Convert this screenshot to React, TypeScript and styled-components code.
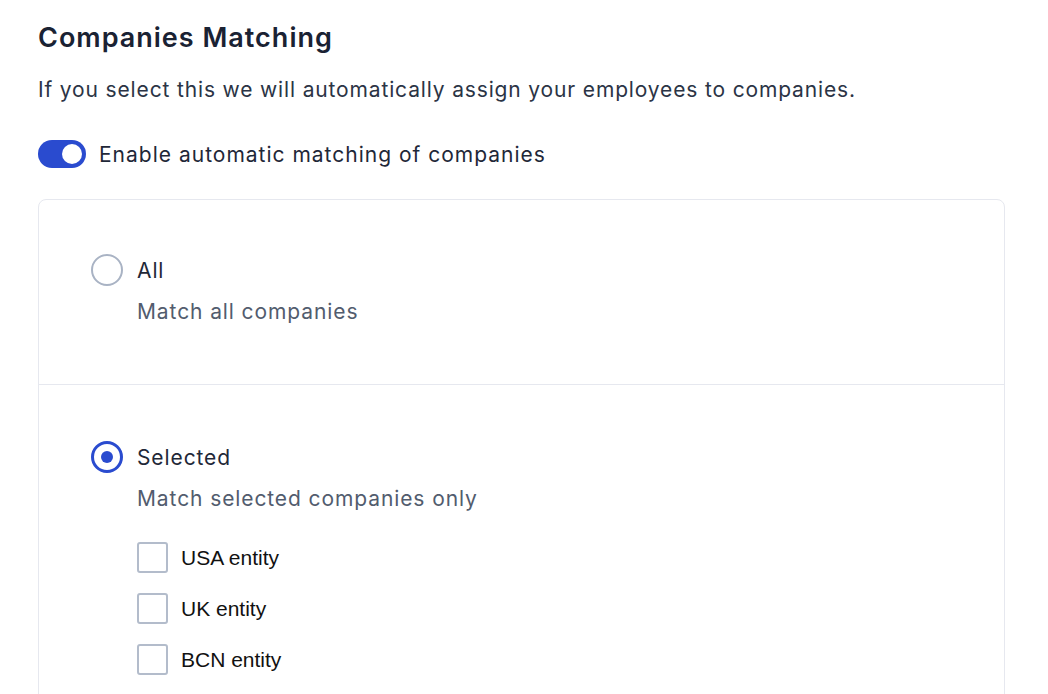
import React, { useState } from "react";
import styled, { createGlobalStyle } from "styled-components";

const GlobalStyle = createGlobalStyle`
  body {
    margin: 0;
    background: #fff;
    font-family: Inter, "Noto Sans", sans-serif;
    color: #1b2434;
  }
`;

const Page = styled.div`
  padding: 20px 43px 0 38px;
  height: 694px;
  overflow: hidden;
  box-sizing: border-box;
`;

const Title = styled.h2`
  margin: 0;
  font-size: 27px;
  font-weight: 600;
  line-height: 36px;
  color: #1a2233;
  letter-spacing: 1px;
`;

const Description = styled.p`
  margin: 20px 0 0;
  font-size: 21px;
  line-height: 28px;
  color: #2b3445;
  letter-spacing: 0.85px;
`;

const ToggleRow = styled.label`
  display: flex;
  align-items: center;
  gap: 13px;
  margin-top: 36px;
  font-size: 21px;
  color: #1f2838;
  letter-spacing: 1px;
  cursor: pointer;
`;

const Track = styled.span<{ on: boolean }>`
  position: relative;
  display: inline-block;
  width: 48px;
  height: 28px;
  border-radius: 14px;
  background: ${(p) => (p.on ? "#2a4bcf" : "#cbd2dc")};
  flex-shrink: 0;
  &::after {
    content: "";
    position: absolute;
    top: 4px;
    left: ${(p) => (p.on ? "24px" : "4px")};
    width: 20px;
    height: 20px;
    border-radius: 50%;
    background: #fff;
  }
`;

const Card = styled.div`
  margin-top: 31px;
  border: 1px solid #e6e8ef;
  border-radius: 8px;
`;

const Option = styled.div`
  padding: 54px 52px 58px;
  & + & {
    border-top: 1px solid #e6e8ef;
    padding-top: 56px;
  }
`;

const OptionHead = styled.label`
  display: flex;
  align-items: center;
  gap: 14px;
  font-size: 21px;
  color: #1f2838;
  letter-spacing: 0.9px;
  cursor: pointer;
`;

const Radio = styled.span<{ checked: boolean }>`
  box-sizing: border-box;
  width: 32px;
  height: 32px;
  border-radius: 50%;
  border: ${(p) => (p.checked ? "3px solid #2a4bcf" : "2px solid #a9b3c4")};
  display: flex;
  align-items: center;
  justify-content: center;
  flex-shrink: 0;
  &::after {
    content: "";
    width: 12px;
    height: 12px;
    border-radius: 50%;
    background: ${(p) => (p.checked ? "#2a4bcf" : "transparent")};
  }
`;

const OptionSub = styled.div`
  margin: 12px 0 0 46px;
  font-size: 21px;
  line-height: 28px;
  color: #525c6e;
  letter-spacing: 0.9px;
`;

const CheckList = styled.div`
  display: flex;
  flex-direction: column;
  gap: 20px;
  margin: 29px 0 0 46px;
`;

const CheckRow = styled.label`
  display: flex;
  align-items: center;
  gap: 13px;
  font-family: "Liberation Sans", Arial, sans-serif;
  font-size: 21px;
  color: #111;
  cursor: pointer;
`;

const Box = styled.span`
  box-sizing: border-box;
  width: 31px;
  height: 31px;
  border: 2px solid #b3bccb;
  border-radius: 3px;
  background: #fff;
  flex-shrink: 0;
`;

const entities = ["USA entity", "UK entity", "BCN entity", "GER entity"];

export default function App() {
  const [enabled, setEnabled] = useState(true);
  const [mode, setMode] = useState<"all" | "selected">("selected");

  return (
    <Page>
      <GlobalStyle />
      <Title>Companies Matching</Title>
      <Description>
        If you select this we will automatically assign your employees to companies.
      </Description>
      <ToggleRow onClick={() => setEnabled(!enabled)}>
        <Track on={enabled} />
        Enable automatic matching of companies
      </ToggleRow>
      <Card>
        <Option>
          <OptionHead onClick={() => setMode("all")}>
            <Radio checked={mode === "all"} />
            All
          </OptionHead>
          <OptionSub>Match all companies</OptionSub>
        </Option>
        <Option>
          <OptionHead onClick={() => setMode("selected")}>
            <Radio checked={mode === "selected"} />
            Selected
          </OptionHead>
          <OptionSub>Match selected companies only</OptionSub>
          <CheckList>
            {entities.map((e) => (
              <CheckRow key={e}>
                <Box />
                {e}
              </CheckRow>
            ))}
          </CheckList>
        </Option>
      </Card>
    </Page>
  );
}
